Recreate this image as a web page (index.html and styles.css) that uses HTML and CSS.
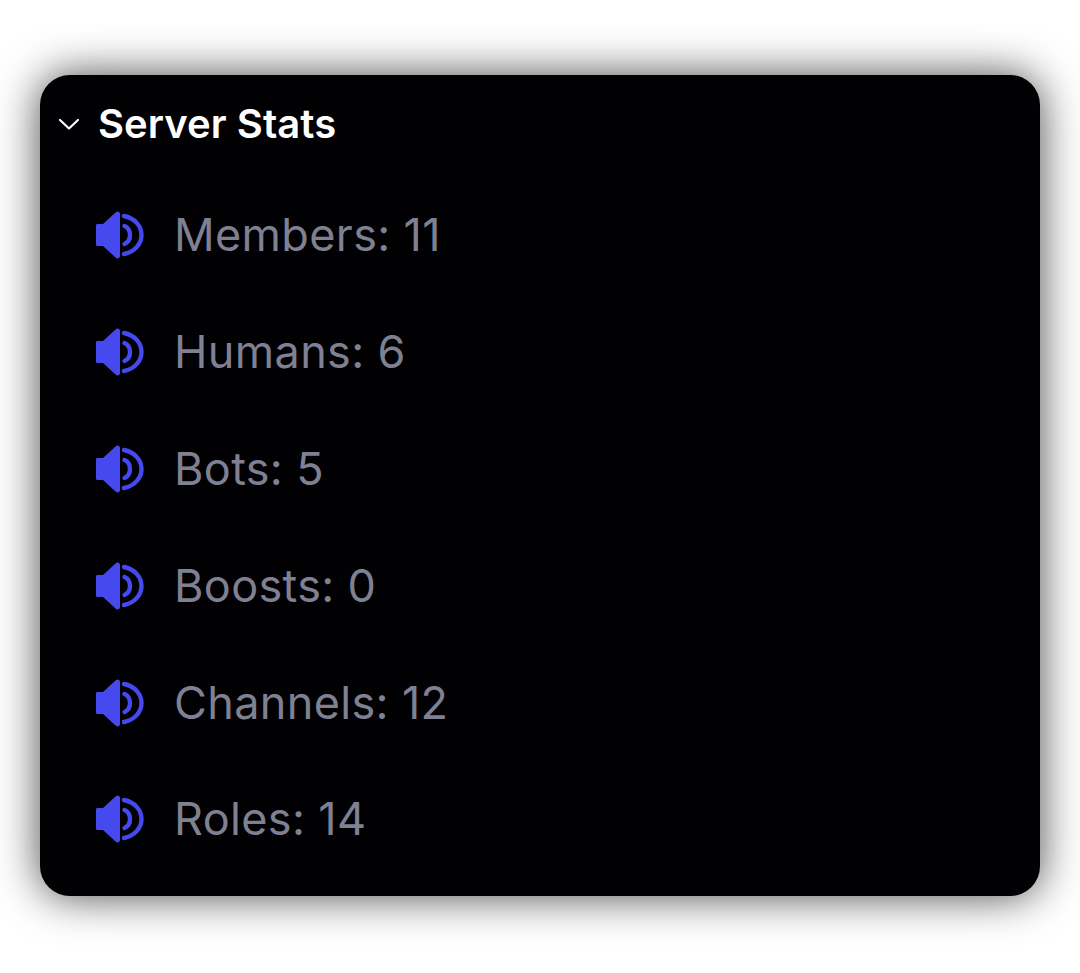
FILE: index.html
```html
<!DOCTYPE html>
<html lang="en">
<head>
<meta charset="utf-8">
<title>Server Stats</title>
<link rel="stylesheet" href="styles.css">
</head>
<body>
<svg class="defs" width="0" height="0" aria-hidden="true">
  <symbol id="speaker" viewBox="0 0 48 48">
    <path d="M1.500 13H7L19.500 1.500C21.500-.3 24 .6 24 3V45C24 47.400 21.500 48.300 19.500 46.500L7 35H1.500C.6 35 0 34.400 0 33.500V14.500C0 13.600 .6 13 1.500 13Z" fill="currentColor"/>
    <path d="M28 5C38.500 7 45.500 15 45.500 24S38.500 41 28 43" fill="none" stroke="currentColor" stroke-width="4.400" stroke-linecap="round"/>
    <path d="M28.500 15C32 16.500 34 20 34 24S32 31.500 28.500 33" fill="none" stroke="currentColor" stroke-width="4.400" stroke-linecap="round"/>
  </symbol>
</svg>
<main class="card">
  <header class="head">
    <svg class="chev" viewBox="0 0 22 14" aria-hidden="true"><path d="M2 3L11 11.500L20 3" fill="none" stroke="currentColor" stroke-width="2.200" stroke-linecap="round" stroke-linejoin="round"/></svg>
    <h1 class="title">Server Stats</h1>
  </header>
  <ul class="list">
    <li class="row"><svg class="icon"><use href="#speaker"/></svg><span class="label">Members: 11</span></li>
    <li class="row"><svg class="icon"><use href="#speaker"/></svg><span class="label">Humans: 6</span></li>
    <li class="row"><svg class="icon"><use href="#speaker"/></svg><span class="label">Bots: 5</span></li>
    <li class="row"><svg class="icon"><use href="#speaker"/></svg><span class="label">Boosts: 0</span></li>
    <li class="row"><svg class="icon"><use href="#speaker"/></svg><span class="label">Channels: 12</span></li>
    <li class="row"><svg class="icon"><use href="#speaker"/></svg><span class="label">Roles: 14</span></li>
  </ul>
</main>
</body>
</html>
```

FILE: styles.css
```css
html, body {
  margin: 0;
  padding: 0;
  background: #fff;
}
body {
  width: 1080px;
  height: 973px;
  overflow: hidden;
  padding: 75px 40px 0;
  box-sizing: border-box;
  font-family: "Inter", "Noto Sans", sans-serif;
}
.defs {
  position: absolute;
}
.card {
  width: 1000px;
  height: 821px;
  background: #010103;
  border-radius: 30px;
  box-shadow: 0 0 44px rgba(0, 0, 0, 0.72);
  box-sizing: border-box;
  padding-top: 20px;
}
.head {
  display: flex;
  align-items: center;
  height: 58px;
  color: #fff;
}
.chev {
  width: 22px;
  height: 14px;
  margin-left: 18px;
  margin-right: 18px;
}
.title {
  margin: 0;
  font-size: 40px;
  font-weight: 600;
  line-height: 58px;
  letter-spacing: 0.05px;
}
.list {
  list-style: none;
  margin: 0;
  padding: 24px 0 0 56px;
  display: flex;
  flex-direction: column;
}
.row {
  display: flex;
  align-items: center;
  height: 116.8px;
}
.icon {
  width: 48px;
  height: 48px;
  color: #4549ee;
  flex: none;
}
.label {
  margin-left: 30px;
  font-size: 45px;
  line-height: 58px;
  letter-spacing: 0.35px;
  color: #7f8092;
}
```
